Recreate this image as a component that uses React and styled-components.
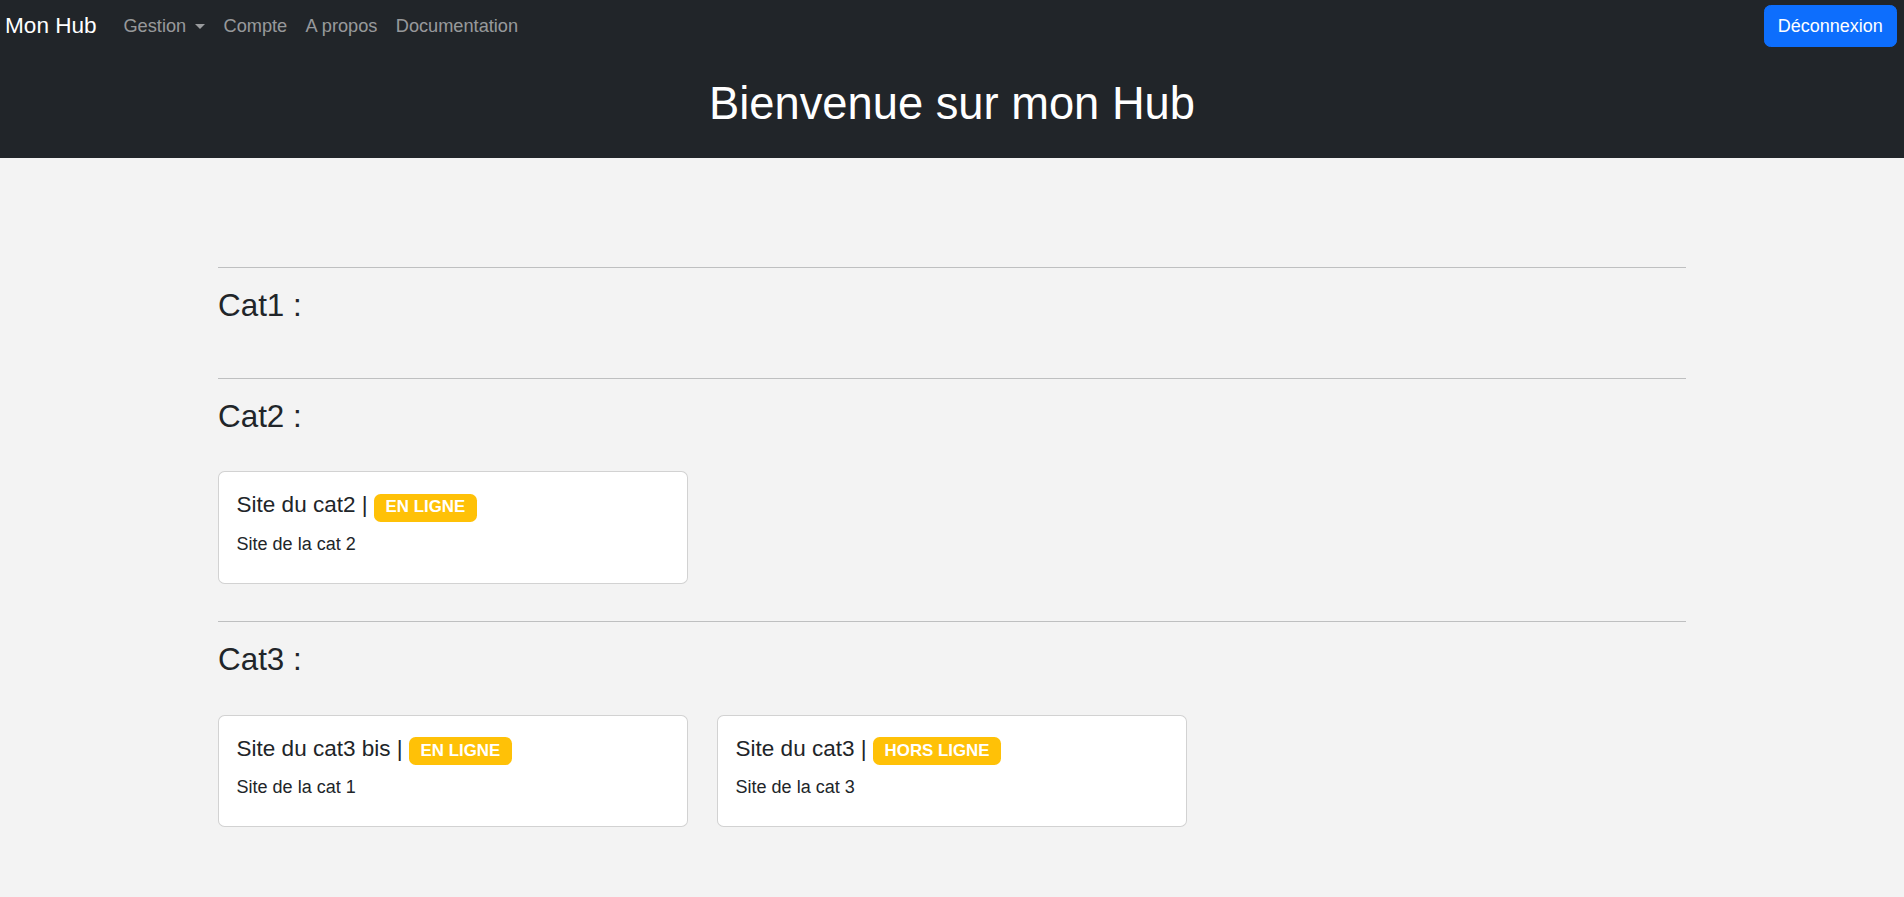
import React from "react"
import styled, { createGlobalStyle } from "styled-components"

const GlobalStyle = createGlobalStyle`
  html, body {
    margin: 0;
    padding: 0;
    background: #f3f3f3;
    font-family: "Liberation Sans", Arial, sans-serif;
    color: #212529;
  }
  * {
    box-sizing: border-box;
  }
`

const Header = styled.header`
  background: #212529;
`

const NavBar = styled.nav`
  display: flex;
  align-items: center;
  height: 52px;
  padding: 5px 7px 5px 5px;
`

const Brand = styled.a`
  font-size: 22.6px;
  color: #fff;
  text-decoration: none;
  margin-right: 17.6px;
  line-height: 1.5;
`

const NavList = styled.ul`
  display: flex;
  list-style: none;
  margin: 0;
  padding: 0;
  flex: 1;
`

const NavLink = styled.a`
  display: flex;
  align-items: center;
  padding: 8.8px 9.2px;
  font-size: 18.2px;
  line-height: 26.4px;
  color: rgba(255, 255, 255, 0.55);
  text-decoration: none;
  cursor: pointer;
`

const Caret = styled.span`
  display: inline-block;
  margin-left: 9px;
  border-top: 5.3px solid currentColor;
  border-left: 5.3px solid transparent;
  border-right: 5.3px solid transparent;
`

const LogoutButton = styled.button`
  font-family: inherit;
  font-size: 18px;
  line-height: 26.4px;
  color: #fff;
  background: #0d6efd;
  border: 1px solid #0d6efd;
  border-radius: 6.6px;
  padding: 6.6px 13.2px;
  cursor: pointer;
`

const Title = styled.h1`
  margin: 0;
  padding: 26px 0 27px;
  text-align: center;
  font-size: 45.3px;
  font-weight: 400;
  line-height: 52.8px;
  color: #fff;
`

const Main = styled.main`
  max-width: 1468px;
  margin: 0 auto;
  padding: 91.4px 0 40px;
`

const Rule = styled.hr`
  margin: 17.6px 0;
  border: 0;
  border-top: 1px solid #212529;
  opacity: 0.25;
`

const CatTitle = styled.h3`
  margin: 0 0 8.8px;
  padding-top: 2.4px;
  font-size: 31.4px;
  font-weight: 400;
  line-height: 36.96px;
`

const CardGrid = styled.div`
  display: flex;
  gap: 29px;
  padding: 20px 0 6.6px;
`

const Card = styled.div`
  width: 470px;
  margin: 7px 0 13px;
  background: #fff;
  border: 1px solid rgba(0, 0, 0, 0.175);
  border-radius: 6.6px;
  padding: 20px 17.6px 17.6px;
`

const CardTitle = styled.h5`
  margin: 0 0 8.8px;
  font-size: 22.5px;
  font-weight: 400;
  line-height: 26.4px;
`

const Badge = styled.span`
  display: inline-block;
  padding: 0.35em 0.7em;
  font-size: 0.75em;
  font-weight: 700;
  line-height: 1;
  color: #fff;
  background: #ffc107;
  border-radius: 6.6px;
  vertical-align: baseline;
`

const CardText = styled.p`
  margin: 0 0 7.6px;
  font-size: 18px;
  line-height: 26.4px;
`

const categories = [
  { name: "Cat1", sites: [] },
  {
    name: "Cat2",
    sites: [{ title: "Site du cat2", status: "EN LIGNE", text: "Site de la cat 2" }],
  },
  {
    name: "Cat3",
    sites: [
      { title: "Site du cat3 bis", status: "EN LIGNE", text: "Site de la cat 1" },
      { title: "Site du cat3", status: "HORS LIGNE", text: "Site de la cat 3" },
    ],
  },
]

const SiteCard = ({ site }) => (
  <Card>
    <CardTitle>
      {site.title} | <Badge>{site.status}</Badge>
    </CardTitle>
    <CardText>{site.text}</CardText>
  </Card>
)

const App = () => {
  return (
    <>
      <GlobalStyle />
      <Header>
        <NavBar>
          <Brand href="#">Mon Hub</Brand>
          <NavList>
            <li>
              <NavLink>
                Gestion <Caret />
              </NavLink>
            </li>
            <li>
              <NavLink>Compte</NavLink>
            </li>
            <li>
              <NavLink>A propos</NavLink>
            </li>
            <li>
              <NavLink>Documentation</NavLink>
            </li>
          </NavList>
          <LogoutButton>Déconnexion</LogoutButton>
        </NavBar>
        <Title>Bienvenue sur mon Hub</Title>
      </Header>
      <Main>
        {categories.map(cat => (
          <section key={cat.name}>
            <Rule />
            <CatTitle>{cat.name} :</CatTitle>
            <CardGrid>
              {cat.sites.map(site => (
                <SiteCard key={site.title} site={site} />
              ))}
            </CardGrid>
          </section>
        ))}
      </Main>
    </>
  )
}

export default App
